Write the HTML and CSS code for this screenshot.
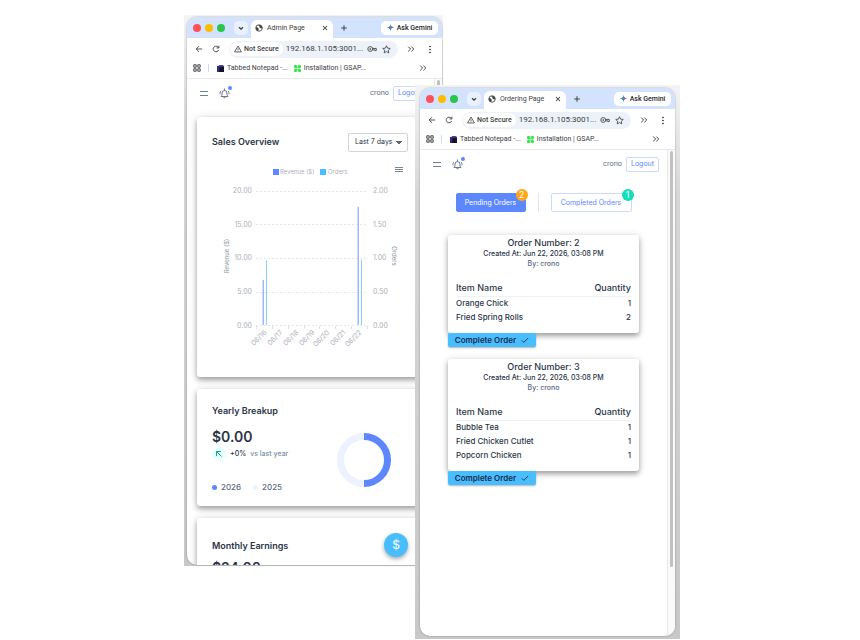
FILE: index.html
```html
<!DOCTYPE html>
<html lang="en">
<head>
    <meta charset="UTF-8">
    <meta name="viewport" content="width=device-width, initial-scale=1.0">
    <title>Admin and ordering</title>
    <link rel="stylesheet" href="styles.css">
</head>
<body>
    <!-- shared icons -->
    <svg class="sprite" aria-hidden="true">
        <symbol id="chev" viewBox="0 0 10 10"><path d="M2.5 4 5 6.5 7.5 4" fill="none" stroke="currentColor" stroke-width="1.6"/></symbol>
        <symbol id="globe" viewBox="0 0 16 16"><circle cx="8" cy="8" r="6.5" fill="none" stroke="currentColor" stroke-width="1.7"/><path d="M2 6.5c3 0 4 1 5 2.5s0 3-1 5C3 13 1.5 10 2 6.5zM7 2c0 2 1 2 2 3s-1 2 1 3 3 0 4.5 1c.5-4-2.5-7.5-7.5-7z" fill="currentColor"/></symbol>
        <symbol id="close" viewBox="0 0 10 10"><path d="m2.5 2.5 5 5m0-5-5 5" stroke="currentColor" stroke-width="1.3"/></symbol>
        <symbol id="plus" viewBox="0 0 10 10"><path d="M5 1.5v7M1.5 5h7" stroke="currentColor" stroke-width="1.2"/></symbol>
        <symbol id="spark" viewBox="0 0 16 16">
            <path d="M8 0c.8 4.8 3.2 7.2 8 8-4.8.8-7.2 3.2-8 8-.8-4.8-3.2-7.2-8-8 4.8-.8 7.2-3.2 8-8z" fill="#3186ff"/>
            <path d="M8 0c.8 4.8 3.2 7.2 8 8H8z" fill="#e8505b"/>
            <path d="M0 8c4.8.8 7.2 3.2 8 8V8z" fill="#35a95b"/>
        </symbol>
        <symbol id="back" viewBox="0 0 10 10"><path d="M9 5H1.5M5 1.5 1.5 5 5 8.5" fill="none" stroke="currentColor" stroke-width="1.1"/></symbol>
        <symbol id="reload" viewBox="0 0 10 10"><path d="M8.3 6.2A3.5 3.5 0 1 1 7.5 2.5L8.5 3.5M8.6.8v2.9H5.7" fill="none" stroke="currentColor" stroke-width="1.1"/></symbol>
        <symbol id="warn" viewBox="0 0 10 10"><path d="M5 1.2 9.3 8.7H.7zM5 4v2.3M5 7v.9" fill="none" stroke="currentColor"/></symbol>
        <symbol id="key" viewBox="0 0 14 10"><circle cx="4.5" cy="5" r="3.4" fill="none" stroke="currentColor" stroke-width="1.2"/><circle cx="4.5" cy="5" r="1.2" fill="currentColor"/><path d="M8 4.2h5v3H11v-1H8" fill="none" stroke="currentColor" stroke-width="1.2"/></symbol>
        <symbol id="star" viewBox="0 0 12 12"><path d="m6 1 1.5 3.2 3.5.4-2.600 2.400.7 3.500L6 8.800l-3.100 1.700.7-3.500L1 4.600l3.500-.4z" fill="none" stroke="currentColor" stroke-width="1.1"/></symbol>
        <symbol id="more" viewBox="0 0 10 10"><path d="M1.5 2 4.5 5l-3 3M5.5 2l3 3-3 3" fill="none" stroke="currentColor" stroke-width="1.2"/></symbol>
        <symbol id="dots" viewBox="0 0 4 12"><circle cx="2" cy="2" r="1"/><circle cx="2" cy="6" r="1"/><circle cx="2" cy="10" r="1"/></symbol>
        <symbol id="apps" viewBox="0 0 10 10"><path d="M1 1h3v3H1zM6 1h3v3H6zM1 6h3v3H1zM6 6h3v3H6z" fill="none" stroke="currentColor" stroke-width="1.2"/></symbol>
        <symbol id="notepad" viewBox="0 0 8 8"><path d="M1 1h7v7H1z" fill="#171525"/><path d="M0 1h3l-1 7H0z" fill="#373080"/><path d="M2 0h5l1 2H2z" fill="#4b42a0"/></symbol>
        <symbol id="gsap" viewBox="0 0 10 10"><path d="M1 0h3v2h2V0h3l1 1v3H8v2h2v3L9 10H6V8H4v2H1L0 9V6h2V4H0V1z" fill="#2fe646"/><circle cx="5" cy="5" r="1.5" fill="#fff"/></symbol>
        <symbol id="bell" viewBox="0 0 12 12"><path d="M2.5 9c.8-1 .8-2 .8-3.5a2.7 2.7 0 0 1 5.4 0C8.7 7 8.7 8 9.5 9zM4.7 9.5c.3 1.7 2.3 1.7 2.6 0M6 2.5V1M1.8 3.5c-.7 1-.8 2-.7 3M10.2 3.5c.7 1 .8 2 .7 3" fill="none" stroke="currentColor" stroke-linecap="round"/></symbol>
        <symbol id="check" viewBox="0 0 10 10"><path d="m1 5.500 2.500 2.500L9 2.500" fill="none" stroke="currentColor" stroke-width="1.1"/></symbol>
    </svg>

    <main class="canvas">
        <section class="shot admin-shot">
            <div class="browser">
                <header class="chrome">
                    <div class="tabs">
                        <i class="light red"></i><i class="light yellow"></i><i class="light green"></i>
                        <button class="tab-search" aria-label="Search tabs"><svg><use href="#chev"/></svg></button>
                        <div class="tab"><svg><use href="#globe"/></svg><span>Admin Page</span><button aria-label="Close tab"><svg><use href="#close"/></svg></button></div>
                        <button class="new-tab" aria-label="New tab"><svg><use href="#plus"/></svg></button>
                        <button class="gemini"><svg><use href="#spark"/></svg>Ask Gemini</button>
                    </div>
                    <div class="toolbar">
                        <button aria-label="Back"><svg><use href="#back"/></svg></button>
                        <button aria-label="Reload"><svg><use href="#reload"/></svg></button>
                        <div class="address">
                            <span class="secure"><svg><use href="#warn"/></svg>Not Secure</span>
                            <span class="url">192.168.1.105:3001...</span>
                            <svg class="key"><use href="#key"/></svg>
                            <svg class="star"><use href="#star"/></svg>
                        </div>
                        <button aria-label="Extensions"><svg><use href="#more"/></svg></button>
                        <button class="menu" aria-label="Menu"><svg><use href="#dots"/></svg></button>
                    </div>
                    <nav class="bookmarks">
                        <svg class="apps"><use href="#apps"/></svg>
                        <a href="#" class="first"><svg><use href="#notepad"/></svg>Tabbed Notepad -...</a>
                        <a href="#"><svg><use href="#gsap"/></svg>Installation | GSAP...</a>
                        <svg class="rest"><use href="#more"/></svg>
                    </nav>
                </header>
                <div class="viewport">
                    <div class="page">
                        <header class="topbar">
                            <button class="burger" aria-label="Toggle sidebar"></button>
                            <button class="bell" aria-label="Notifications"><svg><use href="#bell"/></svg><i></i></button>
                            <span class="user">crono</span>
                            <button class="logout">Logout</button>
                        </header>
                        <div class="cards">
                            <section class="card sales">
                                <div class="card-head">
                                    <h2>Sales Overview</h2>
                                    <select aria-label="Period"><option>Last 7 days</option></select>
                                </div>
                                <svg class="chart" viewBox="212 161 196 200" role="img" aria-label="Revenue and orders">
                                    <g class="legend">
                                        <rect x="273" y="169" width="6" height="6" fill="#5d87ff"/><text x="280" y="174">Revenue ($)</text>
                                        <rect x="320" y="169" width="6" height="6" fill="#49beff"/><text x="328" y="174">Orders</text>
                                    </g>
                                    <path d="M395 167.500h8M395 169.500h8M395 171.500h8" stroke="#7b8794"/>
                                    <path class="grid" d="M256 191.5h112M256 224.5h112M256 258.5h112M256 292.5h112M256 325.5h112"/>
                                    <path class="ticks" d="M256.5 326v3M272.5 326v3M288.5 326v3M304.5 326v3M319.5 326v3M335.5 326v3M351.5 326v3M367.5 326v3"/>
                                    <g class="axis end">
                                        <text x="252" y="193">20.00</text><text x="252" y="227">15.00</text><text x="252" y="260">10.00</text><text x="252" y="294">5.00</text><text x="252" y="328">0.00</text>
                                    </g>
                                    <g class="axis">
                                        <text x="373" y="193">2.00</text><text x="373" y="227">1.50</text><text x="373" y="260">1.00</text><text x="373" y="294">0.50</text><text x="373" y="328">0.00</text>
                                    </g>
                                    <g fill="#9fb5ff"><rect x="262.5" y="280" width="1.5" height="45"/><rect x="357.5" y="207" width="1.5" height="118"/></g>
                                    <g fill="#85d2ff"><rect x="266" y="260" width="1" height="65"/><rect x="361" y="260" width="1" height="65"/></g>
                                    <g class="dates end">
                                        <text transform="translate(267 333) rotate(-45)">06/16</text>
                                        <text transform="translate(283 333) rotate(-45)">06/17</text>
                                        <text transform="translate(299 333) rotate(-45)">06/18</text>
                                        <text transform="translate(315 333) rotate(-45)">06/19</text>
                                        <text transform="translate(330 333) rotate(-45)">06/20</text>
                                        <text transform="translate(346 333) rotate(-45)">06/21</text>
                                        <text transform="translate(362 333) rotate(-45)">06/22</text>
                                    </g>
                                    <g class="axis-title">
                                        <text transform="translate(229 256) rotate(-90)">Revenue ($)</text>
                                        <text transform="translate(392 256) rotate(90)">Orders</text>
                                    </g>
                                </svg>
                            </section>
                            <section class="card yearly">
                                <div>
                                    <h2>Yearly Breakup</h2>
                                    <p class="amount">$0.00</p>
                                    <p class="change"><span class="arrow"><svg viewBox="0 0 8 8"><path d="M1.5 6V1.5H6M1.5 1.5l5 5" fill="none" stroke="#13a98e"/></svg></span><b>+0%</b>vs last year</p>
                                    <p class="years"><span>2026</span><span class="last">2025</span></p>
                                </div>
                                <svg class="donut" viewBox="0 0 54 54"><path d="M27 50.5a23.5 23.5 0 0 1 0-47" stroke="#ecf2ff"/><path d="M27 3.5a23.5 23.5 0 0 1 0 47" stroke="#5d87ff"/></svg>
                            </section>
                            <section class="card monthly">
                                <h2>Monthly Earnings</h2>
                                <p class="amount">$24.00</p>
                                <button class="fab" aria-label="Earnings">$</button>
                            </section>
                        </div>
                    </div>
                    <div class="scroll"><i></i></div>
                </div>
            </div>
        </section>

        <section class="shot order-shot">
            <div class="browser">
                <header class="chrome">
                    <div class="tabs">
                        <i class="light red"></i><i class="light yellow"></i><i class="light green"></i>
                        <button class="tab-search" aria-label="Search tabs"><svg><use href="#chev"/></svg></button>
                        <div class="tab"><svg><use href="#globe"/></svg><span>Ordering Page</span><button aria-label="Close tab"><svg><use href="#close"/></svg></button></div>
                        <button class="new-tab" aria-label="New tab"><svg><use href="#plus"/></svg></button>
                        <button class="gemini"><svg><use href="#spark"/></svg>Ask Gemini</button>
                    </div>
                    <div class="toolbar">
                        <button aria-label="Back"><svg><use href="#back"/></svg></button>
                        <button aria-label="Reload"><svg><use href="#reload"/></svg></button>
                        <div class="address">
                            <span class="secure"><svg><use href="#warn"/></svg>Not Secure</span>
                            <span class="url">192.168.1.105:3001...</span>
                            <svg class="key"><use href="#key"/></svg>
                            <svg class="star"><use href="#star"/></svg>
                        </div>
                        <button aria-label="Extensions"><svg><use href="#more"/></svg></button>
                        <button class="menu" aria-label="Menu"><svg><use href="#dots"/></svg></button>
                    </div>
                    <nav class="bookmarks">
                        <svg class="apps"><use href="#apps"/></svg>
                        <a href="#" class="first"><svg><use href="#notepad"/></svg>Tabbed Notepad -...</a>
                        <a href="#"><svg><use href="#gsap"/></svg>Installation | GSAP...</a>
                        <svg class="rest"><use href="#more"/></svg>
                    </nav>
                </header>
                <div class="viewport">
                    <div class="page">
                        <header class="topbar">
                            <button class="burger" aria-label="Toggle sidebar"></button>
                            <button class="bell" aria-label="Notifications"><svg><use href="#bell"/></svg><i></i></button>
                            <span class="user">crono</span>
                            <button class="logout">Logout</button>
                        </header>
                        <div class="filters">
                            <button class="pending">Pending Orders<span class="badge">2</span></button>
                            <i class="divider"></i>
                            <button class="completed">Completed Orders<span class="badge">1</span></button>
                        </div>
                        <div class="orders">
                            <article>
                                <div class="order">
                                    <h3>Order Number: 2</h3>
                                    <p>Created At: Jun 22, 2026, 03:08 PM</p>
                                    <p class="by">By: crono</p>
                                    <table>
                                        <thead><tr><th>Item Name</th><th>Quantity</th></tr></thead>
                                        <tbody>
                                            <tr><td>Orange Chick</td><td>1</td></tr>
                                            <tr><td>Fried Spring Rolls</td><td>2</td></tr>
                                        </tbody>
                                    </table>
                                </div>
                                <button class="complete">Complete Order<svg><use href="#check"/></svg></button>
                            </article>
                            <article>
                                <div class="order">
                                    <h3>Order Number: 3</h3>
                                    <p>Created At: Jun 22, 2026, 03:08 PM</p>
                                    <p class="by">By: crono</p>
                                    <table>
                                        <thead><tr><th>Item Name</th><th>Quantity</th></tr></thead>
                                        <tbody>
                                            <tr><td>Bubble Tea</td><td>1</td></tr>
                                            <tr><td>Fried Chicken Cutlet</td><td>1</td></tr>
                                            <tr><td>Popcorn Chicken</td><td>1</td></tr>
                                        </tbody>
                                    </table>
                                </div>
                                <button class="complete">Complete Order<svg><use href="#check"/></svg></button>
                            </article>
                        </div>
                    </div>
                    <div class="scroll"><i></i></div>
                </div>
            </div>
        </section>
    </main>
</body>
</html>
```
FILE: styles.css
```css
* {
    box-sizing: border-box;
}
body {
    margin: 0;
    background: #fff;
    color: #2a3547;
    font-family: Inter, "Open Sans", sans-serif;
    font-size: 8px;
    line-height: 10px;
}
h2, h3, p {
    margin: 0;
    font-weight: 500;
}
button, select {
    margin: 0;
    padding: 0;
    border: 0;
    background: none;
    color: inherit;
    font: inherit;
}
button {
    display: flex;
    align-items: center;
    justify-content: center;
    flex: none;
    white-space: nowrap;
}
a {
    color: inherit;
    text-decoration: none;
}
svg {
    flex: none;
    width: 8px;
    height: 8px;
}
.sprite {
    position: absolute;
    width: 0;
    height: 0;
}

/* the two windows lie over each other on a free canvas */
.canvas {
    position: relative;
    min-height: 100vh;
    overflow: hidden;
}
.shot {
    position: absolute;
    display: flex;
    background: linear-gradient(#f4f4f4, #d6d6d6 20%, #c8c8c8);
}
.admin-shot {
    left: 184px;
    top: 15px;
    width: 259px;
    height: 551px;
    padding: 2px 1px 1px 3px;
}
.order-shot {
    left: 415px;
    top: 85px;
    width: 265px;
    height: 554px;
    padding: 3px 5px 3px 5px;
}
.browser {
    flex: 1;
    display: flex;
    flex-direction: column;
    min-width: 0;
    overflow: hidden;
    border-radius: 10px;
    background: #fff;
    box-shadow: 0 0 2px rgba(0, 0, 0, .35);
}

/* browser chrome */
.chrome {
    flex: none;
    border-bottom: 1px solid #e6e8ec;
    color: #3c4043;
    font-family: Roboto, sans-serif;
    font-size: 7px;
}
.tabs {
    display: flex;
    align-items: center;
    height: 21px;
    padding: 0 4px 0 6px;
    background: #d3e3fd;
}
.light {
    flex: none;
    width: 8px;
    height: 8px;
    margin-right: 4px;
    border-radius: 50%;
}
.red { background: #ff5257; }
.yellow { background: #fdbc02; }
.green { background: #2bc44f; }
.tab-search {
    width: 14px;
    height: 14px;
    margin: 0 3px 0 5px;
    border-radius: 5px;
    background: #e9f1fe;
}
.tab {
    display: flex;
    align-items: center;
    align-self: flex-end;
    width: 82px;
    height: 18px;
    padding: 0 4px 2px;
    border-radius: 6px 6px 0 0;
    background: #fff;
}
.tab span {
    flex: 1;
    margin-left: 4px;
}
.new-tab {
    margin-left: 7px;
}
.gemini {
    gap: 3px;
    width: 57px;
    height: 14px;
    margin-left: auto;
    border-radius: 5px;
    background: #fff;
    color: #1f1f1f;
    font-weight: 500;
}
.gemini svg {
    width: 7px;
    height: 7px;
}
.toolbar {
    display: flex;
    align-items: center;
    gap: 9px;
    height: 22px;
    padding: 0 10px 0 8px;
}
.address {
    flex: 1;
    display: flex;
    align-items: center;
    height: 17px;
    padding: 0 7px 0 1px;
    border-radius: 9px;
    background: #edf2fa;
}
.secure {
    display: flex;
    align-items: center;
    gap: 2px;
    height: 14px;
    padding: 0 4px;
    border-radius: 7px;
    background: #fff;
    font-weight: 500;
    white-space: nowrap;
}
.url {
    flex: 1;
    min-width: 0;
    margin-left: 3px;
    font-size: 8px;
}
.key {
    width: 10px;
    margin-right: 5px;
}
.star {
    width: 9px;
    height: 9px;
}
.menu {
    margin-left: 4px;
}
.menu svg {
    width: 4px;
    height: 9px;
}
.bookmarks {
    display: flex;
    align-items: center;
    height: 18px;
    padding: 0 15px 2px 6px;
}
.bookmarks a {
    display: flex;
    align-items: center;
    gap: 3px;
    margin-right: 6px;
    white-space: nowrap;
}
.bookmarks a svg {
    width: 7px;
    height: 7px;
}
.bookmarks .first {
    height: 8px;
    margin-left: 7px;
    padding-left: 8px;
    border-left: 1px solid #c5dcfb;
}
.rest {
    margin-left: auto;
}

/* page shell */
.viewport {
    flex: 1;
    display: flex;
    min-height: 0;
}
.page {
    flex: 1;
    min-width: 0;
}
.scroll {
    width: 8px;
    padding: 1px 2px;
    border-left: 1px solid #e8e8e8;
    background: #fafafa;
}
.scroll i {
    display: block;
    height: 86%;
    border-radius: 2px;
    background: #c1c1c1;
}
.topbar {
    display: flex;
    align-items: center;
    height: 28px;
    padding: 0 8px 0 13px;
}
.burger {
    width: 8px;
    height: 5px;
    border: solid #6f7f98;
    border-width: 1px 0;
}
.bell {
    position: relative;
    margin-left: 11px;
    color: #5a6a85;
}
.bell svg {
    width: 11px;
    height: 11px;
}
.bell i {
    position: absolute;
    top: -2px;
    right: -2px;
    width: 4px;
    height: 4px;
    border-radius: 50%;
    background: #5d87ff;
}
.user {
    margin: 0 4px 0 auto;
    color: #5a6a85;
    font-size: 7px;
}
.logout {
    width: 33px;
    height: 15px;
    border: 1px solid #ccd9ff;
    border-radius: 2px;
    color: #5d87ff;
    font-size: 7px;
}

/* admin dashboard */
.cards {
    display: flex;
    flex-direction: column;
    gap: 12px;
    padding: 10px 11px 0 10px;
}
.card {
    flex: none;
    padding: 15px;
    border-radius: 3px;
    background: #fff;
    box-shadow: 0 3px 5px rgba(0, 0, 0, .3), 0 1px 10px rgba(0, 0, 0, .15);
}
.card h2 {
    font-size: 9px;
    font-weight: 600;
    line-height: 14px;
}
.sales {
    height: 260px;
}
.card-head {
    display: flex;
    align-items: center;
    justify-content: space-between;
    height: 20px;
}
.card select {
    width: 60px;
    height: 19px;
    padding: 0 6px;
    border: 1px solid #d0d5dc;
    border-radius: 2px;
    appearance: none;
    background: conic-gradient(from -45deg at 50% 100%, #666 90deg, transparent 0) no-repeat right 5px center / 6px 3px;
    font-size: 7px;
}
.chart {
    display: block;
    width: 100%;
    height: auto;
    margin-top: 9px;
    font-size: 7px;
    fill: #adb0bb;
}
.grid {
    stroke: #e4e6ea;
    stroke-dasharray: 2 2;
}
.ticks {
    stroke: #e0e0e0;
}
.end {
    text-anchor: end;
}
.axis-title {
    font-size: 6px;
    text-anchor: middle;
    fill: #8b93a1;
}
.legend {
    font-size: 6px;
}
.yearly {
    display: flex;
    justify-content: space-between;
    height: 117px;
}
.amount {
    margin-top: 10px;
    font-size: 14px;
    font-weight: 600;
    line-height: 18px;
}
.change {
    display: flex;
    align-items: center;
    margin-top: 1px;
    color: #7c8fac;
    font-size: 7px;
}
.change b {
    margin: 0 4px;
    color: #2a3547;
    font-weight: 500;
}
.arrow {
    display: flex;
    align-items: center;
    justify-content: center;
    width: 14px;
    height: 14px;
    border-radius: 50%;
    background: #e6fffa;
}
.years {
    display: flex;
    gap: 12px;
    margin-top: 21px;
    color: #5a6a85;
}
.years span {
    display: flex;
    align-items: center;
    gap: 4px;
}
.years span::before {
    content: "";
    width: 5px;
    height: 5px;
    border-radius: 50%;
    background: #5d87ff;
}
.years .last::before {
    background: #ecf2ff;
}
.donut {
    width: 54px;
    height: 54px;
    margin: 29px 17px 0 0;
    fill: none;
    stroke-width: 7;
}
.monthly {
    position: relative;
    padding-top: 21px;
}
.monthly .amount {
    margin-top: 6px;
}
.fab {
    position: absolute;
    top: 15px;
    right: 15px;
    width: 24px;
    height: 24px;
    border-radius: 50%;
    background: #49beff;
    box-shadow: 0 2px 4px rgba(0, 0, 0, .35);
    color: #fff;
    font-size: 12px;
}

/* ordering page */
.filters {
    display: flex;
    justify-content: center;
    gap: 12px;
    margin-top: 15px;
}
.filters button {
    position: relative;
    width: 70px;
    height: 19px;
    border: 1px solid #5d87ff;
    border-radius: 2px;
    font-size: 7px;
}
.filters .pending {
    background: #5d87ff;
    color: #fff;
}
.filters .completed {
    width: 81px;
    border-color: #ccd9ff;
    color: #5d87ff;
}
.badge {
    position: absolute;
    top: -5px;
    right: -3px;
    width: 12px;
    height: 12px;
    border-radius: 50%;
    background: #ffa617;
    color: #fff;
    font-size: 9px;
    line-height: 12px;
    text-align: center;
}
.completed .badge {
    background: #13deb9;
}
.divider {
    width: 1px;
    background: #dfe5ef;
}
.orders {
    display: flex;
    flex-direction: column;
    gap: 12px;
    padding: 23px 28px 0;
}
.order {
    padding: 1px 8px 9px;
    border-radius: 3px;
    background: #fff;
    box-shadow: 0 3px 5px rgba(0, 0, 0, .3), 0 1px 8px rgba(0, 0, 0, .15);
    font-size: 7px;
    text-align: center;
}
.order h3 {
    font-size: 9px;
    line-height: 13px;
}
.order .by {
    color: #5a6a85;
}
.order table {
    width: 100%;
    margin-top: 12px;
    border-collapse: collapse;
    font-size: 8px;
    text-align: left;
}
.order th {
    height: 15px;
    padding: 0 0 1px;
    border-bottom: 1px solid #eef1f5;
    font-size: 9px;
    font-weight: 500;
}
.order td {
    height: 14px;
    padding: 0;
    font-weight: 500;
}
.order tr > :last-child {
    text-align: right;
}
.complete {
    position: relative;
    gap: 5px;
    width: 88px;
    height: 14px;
    border-radius: 2px;
    background: #49beff;
    box-shadow: 0 1px 2px rgba(0, 0, 0, .3);
    color: #172b4d;
    font-weight: 600;
}
```
